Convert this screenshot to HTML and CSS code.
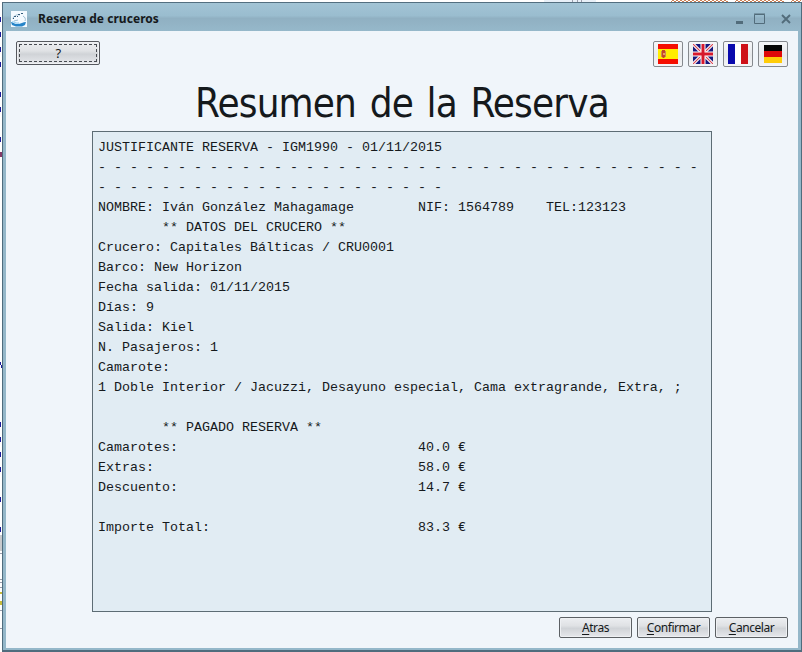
FILE: index.html
```html
<!DOCTYPE html>
<html lang="es">
<head>
<meta charset="utf-8">
<title>Reserva de cruceros</title>
<link rel="stylesheet" href="styles.css">
</head>
<body>
<svg class="backdrop" width="802" height="652" aria-hidden="true">
  <defs>
    <pattern id="squiggle" width="4" height="2" patternUnits="userSpaceOnUse"><path d="M0 0h2v1h-2zM2 1h2v1h-2z" fill="#cc8055"/></pattern>
  </defs>
  <path d="M544 0h52v2h-52z" fill="#e8f0f8"/>
  <path d="M572 0h1v2h-1zM577 0h1v2h-1zM581 0h1v2h-1z" fill="#9a9eac"/>
  <path d="M671 0h57v2h-57zM735 0h49v2h-49zM791 0h10v2h-10z" fill="url(#squiggle)"/>
  <path d="M0 17h1v5h-1zM0 32h1v5h-1zM0 47h1v5h-1zM0 62h1v5h-1zM0 92h1v5h-1zM0 107h1v5h-1zM0 137h1v5h-1zM0 362h1v3h-1zM1 365h1v3h-1zM0 422h1v5h-1zM0 437h1v5h-1zM0 452h1v5h-1zM0 467h1v5h-1zM0 497h1v5h-1zM0 527h1v5h-1z" fill="#1c1c9a"/>
  <path d="M0 152h2v5h-2z" fill="#843a68"/>
  <path d="M0 535h2v16h-2z" fill="#c8cacd"/>
  <path d="M0 553h2v1h-2zM0 579h2v1h-2zM0 582h2v1h-2zM0 587h2v1h-2zM0 610h2v1h-2zM0 628h2v1h-2z" fill="#9a9eac"/>
  <path d="M0 592h2v2h-2zM0 601h2v4h-2z" fill="#c8bc3c"/>
</svg>
<div class="window">
  <header class="titlebar">
    <svg class="app-icon" width="16" height="16" viewBox="0 0 16 16">
      <path d="M0 0h16v16H0z" fill="#f4faff"/>
      <path d="M0 11c2 0 3 2 6 2 4 0 6-2 9-2l-1 3-3 1.500H5L1 14z" fill="#2684c8"/>
      <path d="M2 8c0-3 4-5 7-4M12 5c2 1 3 3 2 5M3 10l4-1" fill="none" stroke="#9cbcd0"/>
      <path d="M3 5h2v1H3zM7 3h2v1H7zM6 5h1v1H6zM10 2h2v1h-2zM2 7h1v1H2z" fill="#345d7c"/>
      <path d="M1 11c2-1 4 2 7 1" fill="none" stroke="#8bc9f0"/>
    </svg>
    <span class="caption">Reserva de cruceros</span>
    <svg class="controls" width="56" height="14" viewBox="0 0 56 14">
      <path d="M1 9h7v3H1z" fill="#526c7b"/>
      <path d="M19.5 2.5h10v9h-10zM19 2h11" fill="none" stroke="#526c7b"/>
      <path d="M47 3l8 8M55 3l-8 8" fill="none" stroke="#526c7b" stroke-width="1.9"/>
    </svg>
  </header>
  <main class="content">
    <div class="toolbar">
      <button class="btn help"><span>?</span></button>
      <div class="flags">
        <button class="flag" aria-label="Español"><svg width="20" height="20"><path d="M0 0h20v20H0z" fill="#f50d00"/><path d="M0 5h20v10H0z" fill="#ffed00"/><path d="M3 7h1v6H3zM7 7h1v6H7z" fill="#c88b50"/><path d="M4 6h3v7l-1 1H5l-1-1z" fill="#c54628"/><path d="M5 9h2v2H5z" fill="#e89b62"/></svg></button>
        <button class="flag" aria-label="English"><svg width="20" height="20" viewBox="0 0 20 20"><path d="M0 0h20v20H0z" fill="#17177e"/><path d="M0 0l20 20M20 0L0 20" stroke="#fff" stroke-width="3.2"/><path d="M0 0l20 20M20 0L0 20" stroke="#d83d4d" stroke-width="1.1"/><path d="M10 0v20M0 10h20" stroke="#fff" stroke-width="5"/><path d="M10 0v20M0 10h20" stroke="#d7182c" stroke-width="3"/></svg></button>
        <button class="flag" aria-label="Français"><svg width="20" height="20"><path d="M0 0h20v20H0z" fill="#fff"/><path d="M0 0h7v20H0z" fill="#0909ad"/><path d="M13 0h7v20h-7z" fill="#ce1018"/></svg></button>
        <button class="flag" aria-label="Deutsch"><svg width="18" height="18"><path d="M0 0h18v6H0z" fill="#050505"/><path d="M0 6h18v6H0z" fill="#df0909"/><path d="M0 12h18v6H0z" fill="#ffcc08"/></svg></button>
      </div>
    </div>
    <h1 class="title">Resumen de la Reserva</h1>
    <pre class="receipt">JUSTIFICANTE RESERVA - IGM1990 - 01/11/2015
- - - - - - - - - - - - - - - - - - - - - - - - - - - - - - - - - - - - - -
- - - - - - - - - - - - - - - - - - - - - -
NOMBRE: Iván González Mahagamage        NIF: 1564789    TEL:123123
        ** DATOS DEL CRUCERO **
Crucero: Capitales Bálticas / CRU0001
Barco: New Horizon
Fecha salida: 01/11/2015
Días: 9
Salida: Kiel
N. Pasajeros: 1
Camarote:
1 Doble Interior / Jacuzzi, Desayuno especial, Cama extragrande, Extra, ;

        ** PAGADO RESERVA **
Camarotes:                              40.0 €
Extras:                                 58.0 €
Descuento:                              14.7 €

Importe Total:                          83.3 €</pre>
    <footer class="actions">
      <button class="btn"><span class="key">A</span>tras</button>
      <button class="btn"><span class="key">C</span>onfirmar</button>
      <button class="btn"><span class="key">C</span>ancelar</button>
    </footer>
  </main>
</div>
</body>
</html>
```
FILE: styles.css
```css
* { box-sizing: border-box; }
body {
  margin: 0;
  width: 802px;
  height: 652px;
  padding: 2px 0 0 2px;
  overflow: hidden;
  background: #fff;
  color: #15191c;
  font-family: "Noto Sans", sans-serif;
}
.backdrop { position: absolute; top: 0; left: 0; }
.window {
  position: relative;
  width: 800px;
  height: 650px;
  border: 1px solid #4f6c7d;
  border-top-color: #536f80;
  border-bottom-width: 2px;
  padding: 0 3px 2px;
  background: #94b7c9;
}
.titlebar {
  display: flex;
  align-items: center;
  height: 28px;
  margin: 0 -3px;
  padding: 3px 10px 0 8px;
  background: linear-gradient(#a2c4d5 0, #9abdcf 45%, #90b0c2 55%, #96b8ca 100%);
}
.app-icon { flex: none; }
.caption {
  margin-left: 11px;
  font: bold 12px/16px "Noto Sans", sans-serif;
  letter-spacing: 0.05px;
  white-space: nowrap;
}
.controls { margin-left: auto; }
.content {
  height: 617px;
  padding: 10px 10px 0;
  background: #f0f5fa;
}
.toolbar { display: flex; justify-content: space-between; height: 35px; }
.btn, .flag {
  border: 1px solid #5c6064;
  border-radius: 2px;
  padding: 0;
  color: #15191c;
  background: linear-gradient(#eceef1 0, #e0e2e5 40%, #d0d3d7 55%, #e6e8ec 100%);
}
.btn {
  width: 73px;
  height: 21px;
  font: 12px/17px "Noto Sans", sans-serif;
  letter-spacing: -0.45px;
  box-shadow: inset 0 0 0 1px #eef0f3;
}
.help { width: 84px; height: 24px; padding: 2px; border-color: #55585e; font-size: 13px; }
.help span { display: block; height: 18px; border: 1px dashed #464a50; line-height: 17px; }
.flags { display: flex; gap: 5px; }
.flag {
  display: flex;
  align-items: center;
  justify-content: center;
  width: 30px;
  height: 26px;
  border-color: #85898e;
  background: linear-gradient(#f6f7f9, #e7e9ec 55%, #f4f5f7);
}
.title {
  height: 55px;
  margin: 0;
  text-align: center;
  font: 400 40px/54px "DejaVu Sans Condensed", "DejaVu Sans", sans-serif;
  font-stretch: condensed;
  letter-spacing: -0.85px;
  word-spacing: 3px;
  white-space: nowrap;
}
.receipt {
  width: 620px;
  height: 481px;
  margin: 0 0 0 76px;
  padding: 6px 5px 5px;
  border: 1px solid #5d6c74;
  background: #e1ecf3;
  font: 13.3333px/20px "Liberation Mono", monospace;
}
.actions { display: flex; justify-content: flex-end; gap: 5px; padding-top: 5px; }
.key { text-decoration: underline; text-underline-offset: 2px; }
```
